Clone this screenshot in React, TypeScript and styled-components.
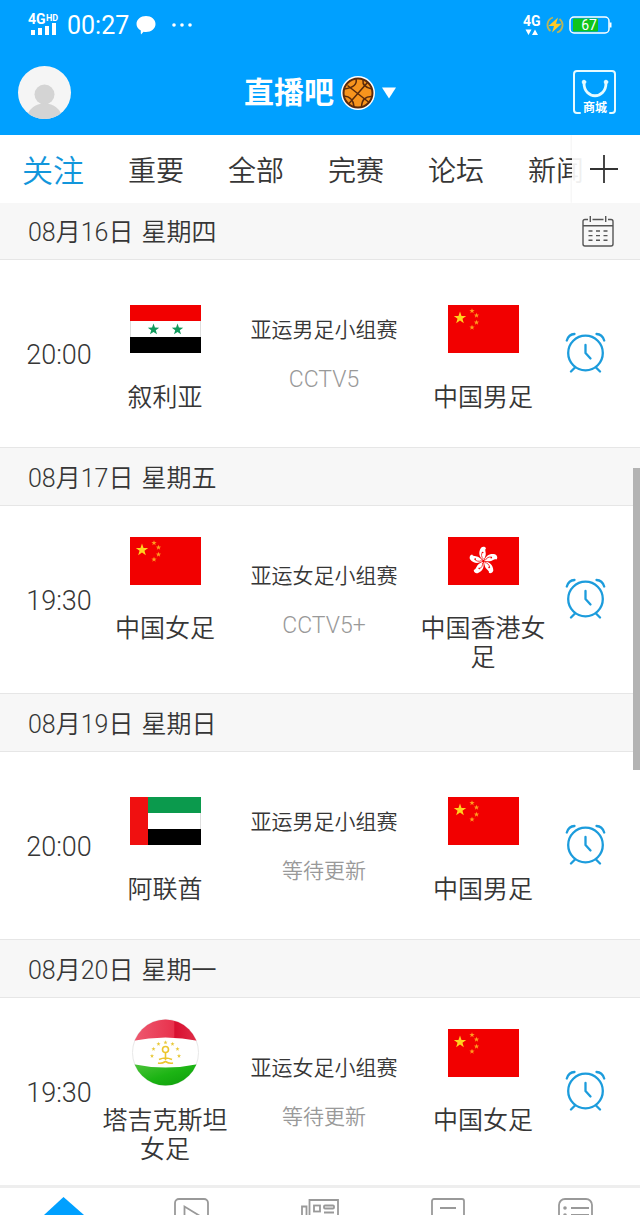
import React from "react";
import styled, { createGlobalStyle } from "styled-components";

const BLUE = "#00a0ff";
const LINE_BLUE = "#1c9cdc";
const INK = "#363636";
const MUTED = "#999";
const RULE = "#e6e6e6";

const GlobalStyle = createGlobalStyle`
  * { box-sizing: border-box; }
  body {
    margin: 0;
    background: #fff;
    color: ${INK};
    font-family: Roboto, "Noto Sans CJK SC", sans-serif;
    font-weight: 350;
  }
  button { padding: 0; border: 0; background: none; font: inherit; color: inherit; cursor: pointer; }
  a { color: inherit; text-decoration: none; }
  ul { margin: 0; padding: 0; list-style: none; }
  h1, h2, p { margin: 0; font-weight: inherit; }
  svg { display: block; flex: none; }
`;

const Page = styled.div`
  position: relative;
  display: flex;
  flex-direction: column;
  height: 100vh;
  overflow: hidden;
`;

const Header = styled.header`
  flex: none;
  background: ${BLUE};
  color: #fff;
`;

const StatusBar = styled.div`
  display: flex;
  align-items: center;
  justify-content: space-between;
  height: 50px;
  padding: 0 28px;
`;

const StatusGroup = styled.div<{ $gap: number }>`
  display: flex;
  align-items: center;
  gap: ${(p) => p.$gap}px;
`;

const Clock = styled.time`
  font-size: 25px;
  line-height: 30px;
  font-weight: 400;
  padding-top: 2px;
`;

const TitleBar = styled.div`
  display: grid;
  grid-template-columns: 1fr auto 1fr;
  align-items: center;
  height: 85px;
  padding: 0 18px;
`;

const Avatar = styled.button`
  width: 53px;
  height: 53px;
  border-radius: 50%;
  overflow: hidden;
  background: #f5f5f5;
`;

const Brand = styled.button`
  display: flex;
  align-items: center;
  gap: 7px;
`;

const BrandName = styled.h1`
  padding-bottom: 6px;
  font-family: "Noto Sans CJK SC", sans-serif;
  font-size: 30px;
  line-height: 36px;
  font-weight: 700;
`;

const ShopButton = styled.button`
  justify-self: end;
  margin-right: 6px;
`;

const TabBar = styled.nav`
  position: relative;
  z-index: 1;
  flex: none;
  height: 68px;
  margin-bottom: -2px;
  overflow: hidden;
  background: #fff;
`;

const TabList = styled.ul`
  display: flex;
  align-items: center;
  gap: 44px;
  height: 100%;
  padding: 6px 0 0 22px;
`;

const Tab = styled.a<{ $active?: boolean }>`
  display: block;
  white-space: nowrap;
  font-size: ${(p) => (p.$active ? 31 : 28)}px;
  line-height: 40px;
  color: ${(p) => (p.$active ? "#1296db" : INK)};
`;

const AddTab = styled.button`
  position: absolute;
  top: 0;
  right: 0;
  display: flex;
  align-items: center;
  width: 68px;
  height: 100%;
  padding-left: 18px;
  background: rgba(255, 255, 255, 0.92);
  box-shadow: -1px 0 2px rgba(0, 0, 0, 0.05);
`;

const Schedule = styled.main`
  flex: none;
`;

const DateBar = styled.div`
  display: flex;
  align-items: center;
  justify-content: space-between;
  height: 59px;
  padding: 2px 26px 0 28px;
  background: #f7f7f7;
  border-top: 1px solid ${RULE};
  border-bottom: 1px solid ${RULE};
`;

const DateText = styled.h2`
  display: flex;
  gap: 8px;
  padding-top: 2px;
  font-size: 25px;
  line-height: 32px;
`;

const Match = styled.article`
  display: grid;
  grid-template-columns: 102px 126px 1fr 126px 94px;
  align-items: center;
  align-content: center;
  height: 187px;
  padding-bottom: 2px;
`;

const Kickoff = styled.time`
  padding: 4px 0 0 16px;
  text-align: center;
  font-size: 27px;
  line-height: 32px;
`;

const Team = styled.div`
  display: flex;
  flex-direction: column;
  align-items: center;
  align-self: start;
  gap: 18px;
`;

const FlagBox = styled.div`
  display: flex;
  align-items: center;
  justify-content: center;
  width: 71px;
  height: 71px;
`;

const TeamName = styled.p`
  width: 100%;
  text-align: center;
  font-size: 25px;
  line-height: 29px;
`;

const Event = styled.div`
  display: flex;
  flex-direction: column;
  align-items: center;
  gap: 20px;
  padding-top: 4px;
`;

const EventName = styled.p`
  font-size: 21px;
  line-height: 29px;
  white-space: nowrap;
`;

const Channel = styled.p<{ $latin: boolean }>`
  font-size: ${(p) => (p.$latin ? 23 : 21)}px;
  line-height: 29px;
  color: ${MUTED};
`;

const Remind = styled.button`
  justify-self: center;
  margin-right: 16px;
`;

const BottomNav = styled.nav`
  flex: none;
  display: grid;
  grid-template-columns: repeat(5, 1fr);
  justify-items: center;
  height: 98px;
  padding-top: 8px;
  border-top: 3px solid #eee;
  background: #fff;
`;

const ScrollThumb = styled.div`
  position: absolute;
  z-index: 2;
  top: 468px;
  right: 0;
  width: 7px;
  height: 302px;
  background: #b3b3b3;
`;

function starPoints(cx: number, cy: number, r: number) {
  return Array.from({ length: 10 }, (_, i) => {
    const radius = i % 2 ? r * 0.4 : r;
    const a = -Math.PI / 2 + (i * Math.PI) / 5;
    return `${(cx + radius * Math.cos(a)).toFixed(2)},${(cy + radius * Math.sin(a)).toFixed(2)}`;
  }).join(" ");
}

const SyriaFlag = () => (
  <svg width="71" height="48" viewBox="0 0 71 48">
    <rect width="71" height="48" fill="#fff" />
    <rect width="71" height="16" fill="#f20000" />
    <rect y="32" width="71" height="16" fill="#000" />
    <path d="M.5 16v16M70.500 16v16" stroke="#ddd" />
    <polygon points={starPoints(23.5, 24.5, 6)} fill="#109a5c" />
    <polygon points={starPoints(47.5, 24.5, 6)} fill="#109a5c" />
  </svg>
);

const ChinaFlag = () => (
  <svg width="71" height="48" viewBox="0 0 71 48">
    <rect width="71" height="48" fill="#f20000" />
    <polygon points={starPoints(12, 13, 6.5)} fill="#ffd21f" />
    {[[24, 6], [28.5, 10.5], [28.5, 17.5], [24, 22.5]].map(([x, y]) => (
      <polygon key={`${x}-${y}`} points={starPoints(x, y, 2.8)} fill="#ff9d1f" />
    ))}
  </svg>
);

const HongKongFlag = () => (
  <svg width="71" height="48" viewBox="0 0 71 48">
    <rect width="71" height="48" fill="#f20000" />
    <g transform="translate(35.5 24)">
      {[0, 72, 144, 216, 288].map((a) => (
        <g key={a} transform={`rotate(${a - 4})`}>
          <path d="M0-1C-4-4-5-9-1.500-13.500C0-14.800 3-14.500 3.500-12.500C1.500-11.500 3.500-8 2.500-5.500Q1.800-3 0-1Z" fill="#fff" />
          <path d="M0-2C-2-4-2-7-.5-9" fill="none" stroke="#f20000" strokeWidth=".7" />
          <circle cx="-.2" cy="-8.500" r=".8" fill="#f20000" />
        </g>
      ))}
    </g>
  </svg>
);

const UaeFlag = () => (
  <svg width="71" height="48" viewBox="0 0 71 48">
    <rect width="71" height="48" fill="#fff" />
    <path d="M70.500 16v16" stroke="#ddd" />
    <rect x="18" width="53" height="16" fill="#0b9a4d" />
    <rect x="18" y="32" width="53" height="16" fill="#000" />
    <rect width="18" height="48" fill="#f01010" />
  </svg>
);

const TajikistanFlag = () => (
  <svg width="67" height="67" viewBox="0 0 67 67">
    <defs>
      <clipPath id="tj-round"><circle cx="33.500" cy="33.500" r="33" /></clipPath>
      <linearGradient id="tj-red" x1="0" x2="1" y1="0" y2="0">
        <stop offset="0" stopColor="#ee5c72" />
        <stop offset=".62" stopColor="#e8324d" />
        <stop offset=".64" stopColor="#d80f30" />
        <stop offset="1" stopColor="#e0304a" />
      </linearGradient>
      <linearGradient id="tj-green" x1="0" x2="1" y1="0" y2="1">
        <stop offset="0" stopColor="#4fc43c" />
        <stop offset=".5" stopColor="#1cb414" />
        <stop offset="1" stopColor="#0c9a0a" />
      </linearGradient>
    </defs>
    <circle cx="33.500" cy="33.500" r="33" fill="#fff" stroke="#e8e8e8" />
    <g clipPath="url(#tj-round)">
      <path d="M0 0H67V22Q33.500 15 0 22Z" fill="url(#tj-red)" />
      <path d="M0 45Q33.500 52 67 45V67H0Z" fill="url(#tj-green)" />
    </g>
    <g fill="none" stroke="#ecc62e" strokeWidth="1.600">
      <circle cx="33.500" cy="30.500" r="3" />
      <path d="M33.500 34v7M27 40.500q6.500-3 13 0M26 44q3.500 1 7.500-1.500q4 2.500 7.500 1.500" />
    </g>
    {[[20, 37], [21.5, 30], [26.5, 25], [33.5, 23.5], [40.5, 25], [45.5, 30], [47, 37]].map(([x, y]) => (
      <polygon key={x} points={starPoints(x, y, 2.2)} fill="#e8c93c" />
    ))}
  </svg>
);

const AlarmIcon = () => (
  <svg width="41" height="41" viewBox="0 0 41 41" fill="none" stroke={LINE_BLUE} strokeWidth="2.300" strokeLinecap="round" strokeLinejoin="round">
    <circle cx="20.500" cy="21" r="17.300" />
    <path d="M20.500 13v8l5 5.500" />
    <path d="M1.800 8.500C3 4.500 5.500 2.200 9.500 2M39.200 8.500C38 4.500 35.500 2.200 31.500 2M10 35.500l-4 4M31 35.500l4 4" />
  </svg>
);

const CalendarIcon = () => (
  <svg width="32" height="31" viewBox="0 0 32 31" fill="none" stroke="#555" strokeWidth="1.400">
    <path d="M6 3.500H3Q1 3.500 1 5.500V28Q1 30 3 30H29Q31 30 31 28V5.500Q31 3.500 29 3.500H26M10.500 3.500H21.500M8.300 0V6M23.700 0V6M1 9.800H31" />
    <path d="M6.500 15h4M14 15h4M21.500 15h4M6.500 19.600h4M14 19.600h4M21.500 19.600h4M6.500 24.200h4M14 24.200h4M21.500 24.200h4" />
  </svg>
);

const SignalIcon = () => (
  <svg width="32" height="30" viewBox="0 0 32 30" fill="#fff">
    <g fontFamily="Roboto, sans-serif" fontWeight="700">
      <text x="0" y="14" fontSize="14">4G</text>
      <text x="18" y="11" fontSize="9">HD</text>
    </g>
    <rect x="3" y="20" width="4" height="5" />
    <rect x="10" y="18" width="4" height="7" />
    <rect x="17" y="16" width="4" height="9" />
    <rect x="24" y="13" width="4" height="12" />
  </svg>
);

const BubbleIcon = () => (
  <svg width="20" height="20" viewBox="0 0 20 20" fill="#fff">
    <path d="M10 1C15.300 1 19.500 4.500 19.500 9S15.300 17 10 17Q8.800 17 7.600 16.700L5 19.500Q4.600 17.500 4.800 15.600C2.200 14.200.5 11.700.5 9C.5 4.500 4.700 1 10 1Z" />
  </svg>
);

const DotsIcon = () => (
  <svg width="20" height="4" viewBox="0 0 20 4" fill="#fff">
    <circle cx="2" cy="2" r="1.800" />
    <circle cx="10" cy="2" r="1.800" />
    <circle cx="18" cy="2" r="1.800" />
  </svg>
);

const DataIcon = () => (
  <svg width="18" height="22" viewBox="0 0 18 22" fill="#fff">
    <text x="0" y="12" fontSize="14" fontWeight="700" fontFamily="Roboto, sans-serif">4G</text>
    <path d="M2.500 15.500h6L5.500 21ZM9 21h6L12 15.500Z" />
  </svg>
);

const ChargeIcon = () => (
  <svg width="18" height="18" viewBox="0 0 18 18">
    <path d="M7 1.500A7.700 7.700 0 0 0 4.500 15M11 16.500A7.700 7.700 0 0 0 13.500 3" fill="none" stroke="#b9b45a" strokeWidth="1.800" />
    <path d="M12 1.500L2.500 10H8L6 16.500L15.500 7.800H10Z" fill="#ffc928" />
  </svg>
);

const BatteryIcon = () => (
  <svg width="43" height="18" viewBox="0 0 43 18">
    <rect x="4" y="2.500" width="25" height="13" rx="1" fill="#0fc51c" />
    <rect x="1" y="1" width="39" height="16" rx="4" fill="none" stroke="#fff" strokeWidth="1.500" />
    <path d="M41.500 6.500v5" stroke="#fff" strokeWidth="2" />
    <text x="20" y="14" textAnchor="middle" fontSize="14" fontWeight="400" fill="#fff" fontFamily="Roboto, sans-serif">67</text>
  </svg>
);

const PersonIcon = () => (
  <svg width="53" height="53" viewBox="0 0 53 53" fill="#d4d4d4">
    <circle cx="26.500" cy="28.500" r="10" />
    <path d="M8 53Q12 37.500 26.500 37.500T45 53Z" />
  </svg>
);

const BasketballIcon = () => (
  <svg width="34" height="34" viewBox="0 0 34 34">
    <circle cx="17" cy="17" r="17" fill="#fff" />
    <circle cx="17" cy="17" r="14.500" fill="#f7941d" stroke="#5a2a0c" strokeWidth="2" />
    <g fill="none" stroke="#5a2a0c" strokeWidth="1.500">
      <path d="M6.500 9.500L27.500 26M26.500 6.500L8 27.500" />
      <path d="M15 3Q17 11 3.500 13M22 4Q21 11 31 13M3 20Q12 20.500 13 30.500M31 20.500Q21 20 20.500 31" />
    </g>
  </svg>
);

const CaretIcon = () => (
  <svg width="14" height="12" viewBox="0 0 14 12" fill="#fff">
    <path d="M0 .5H14L7 11.500Z" />
  </svg>
);

const ShopIcon = () => (
  <svg width="43" height="45" viewBox="0 0 43 45" fill="none" stroke="#e6fbff" strokeLinecap="round">
    <path d="M7 43H4Q1 43 1 40V4Q1 1 4 1H39Q42 1 42 4V40Q42 43 39 43H37" strokeWidth="2" />
    <path d="M11 13C11 30 33 30 33 13" strokeWidth="2.800" />
    <circle cx="11" cy="12" r="1.800" fill="#e6fbff" />
    <circle cx="33" cy="12" r="1.800" fill="#e6fbff" />
    <text x="22" y="42" textAnchor="middle" fontSize="12" fontWeight="700" fill="#fff" stroke="none" fontFamily="'Noto Sans CJK SC', sans-serif">商城</text>
  </svg>
);

const PlusIcon = () => (
  <svg width="28" height="28" viewBox="0 0 28 28" stroke="#333" strokeWidth="1.800">
    <path d="M14 0V28M0 14H28" />
  </svg>
);

const NavIcon = ({ children }: { children: React.ReactNode }) => (
  <svg width="40" height="40" viewBox="0 0 40 40" fill="none" stroke="#999" strokeWidth="1.800">
    {children}
  </svg>
);

const navItems = [
  {
    label: "首页",
    icon: <path d="M19.500 1L40 19V38H0V19Z" fill={BLUE} stroke="none" />,
  },
  {
    label: "视频",
    icon: (
      <>
        <rect x="3" y="3" width="33" height="33" rx="4" />
        <path d="M12.500 10.500V30L28 20Z" />
      </>
    ),
  },
  {
    label: "新闻",
    icon: (
      <>
        <path d="M9.500 35V4H38V35M6.500 35V10.500H2V35H38" />
        <rect x="14" y="9.500" width="6" height="6" />
        <rect x="24" y="9.500" width="10" height="3" rx="1" />
        <path d="M24 16.500H34M14 21H34" />
      </>
    ),
  },
  {
    label: "社区",
    icon: (
      <>
        <rect x="4" y="3" width="32" height="34" rx="2" />
        <path d="M12 12H28M12 20H28" />
      </>
    ),
  },
  {
    label: "更多",
    icon: (
      <>
        <rect x="3" y="3" width="33" height="34" rx="6" />
        <path d="M15 12H33M15 19H33" />
        <circle cx="9" cy="12" r="1.800" fill="#999" stroke="none" />
        <circle cx="9" cy="19" r="1.800" fill="#999" stroke="none" />
      </>
    ),
  },
];

const tabs = ["关注", "重要", "全部", "完赛", "论坛", "新闻"];

type Side = { name: string; flag: React.ReactNode };
type Fixture = {
  date: string;
  weekday: string;
  time: string;
  home: Side;
  away: Side;
  event: string;
  channel: string;
};

const fixtures: Fixture[] = [
  {
    date: "08月16日",
    weekday: "星期四",
    time: "20:00",
    home: { name: "叙利亚", flag: <SyriaFlag /> },
    away: { name: "中国男足", flag: <ChinaFlag /> },
    event: "亚运男足小组赛",
    channel: "CCTV5",
  },
  {
    date: "08月17日",
    weekday: "星期五",
    time: "19:30",
    home: { name: "中国女足", flag: <ChinaFlag /> },
    away: { name: "中国香港女足", flag: <HongKongFlag /> },
    event: "亚运女足小组赛",
    channel: "CCTV5+",
  },
  {
    date: "08月19日",
    weekday: "星期日",
    time: "20:00",
    home: { name: "阿联酋", flag: <UaeFlag /> },
    away: { name: "中国男足", flag: <ChinaFlag /> },
    event: "亚运男足小组赛",
    channel: "等待更新",
  },
  {
    date: "08月20日",
    weekday: "星期一",
    time: "19:30",
    home: { name: "塔吉克斯坦女足", flag: <TajikistanFlag /> },
    away: { name: "中国女足", flag: <ChinaFlag /> },
    event: "亚运女足小组赛",
    channel: "等待更新",
  },
];

const TeamCell = ({ side }: { side: Side }) => (
  <Team>
    <FlagBox>{side.flag}</FlagBox>
    <TeamName>{side.name}</TeamName>
  </Team>
);

export default function App() {
  return (
    <Page>
      <GlobalStyle />
      <Header>
        <StatusBar>
          <StatusGroup $gap={16}>
            <StatusGroup $gap={7}>
              <SignalIcon />
              <Clock>00:27</Clock>
              <BubbleIcon />
            </StatusGroup>
            <DotsIcon />
          </StatusGroup>
          <StatusGroup $gap={5}>
            <DataIcon />
            <ChargeIcon />
            <BatteryIcon />
          </StatusGroup>
        </StatusBar>
        <TitleBar>
          <Avatar aria-label="个人中心"><PersonIcon /></Avatar>
          <Brand>
            <BrandName>直播吧</BrandName>
            <BasketballIcon />
            <CaretIcon />
          </Brand>
          <ShopButton aria-label="商城"><ShopIcon /></ShopButton>
        </TitleBar>
      </Header>
      <TabBar>
        <TabList>
          {tabs.map((t, i) => (
            <li key={t}><Tab href="#" $active={i === 0}>{t}</Tab></li>
          ))}
        </TabList>
        <AddTab aria-label="添加频道"><PlusIcon /></AddTab>
      </TabBar>
      <Schedule>
        {fixtures.map((f, i) => (
          <section key={f.date}>
            <DateBar>
              <DateText>
                <span>{f.date}</span>
                <span>{f.weekday}</span>
              </DateText>
              {i === 0 && <button aria-label="日历"><CalendarIcon /></button>}
            </DateBar>
            <Match>
              <Kickoff>{f.time}</Kickoff>
              <TeamCell side={f.home} />
              <Event>
                <EventName>{f.event}</EventName>
                <Channel $latin={f.channel.startsWith("CCTV")}>{f.channel}</Channel>
              </Event>
              <TeamCell side={f.away} />
              <Remind aria-label="提醒"><AlarmIcon /></Remind>
            </Match>
          </section>
        ))}
      </Schedule>
      <BottomNav>
        {navItems.map((n) => (
          <a key={n.label} href="#" aria-label={n.label}><NavIcon>{n.icon}</NavIcon></a>
        ))}
      </BottomNav>
      <ScrollThumb />
    </Page>
  );
}
